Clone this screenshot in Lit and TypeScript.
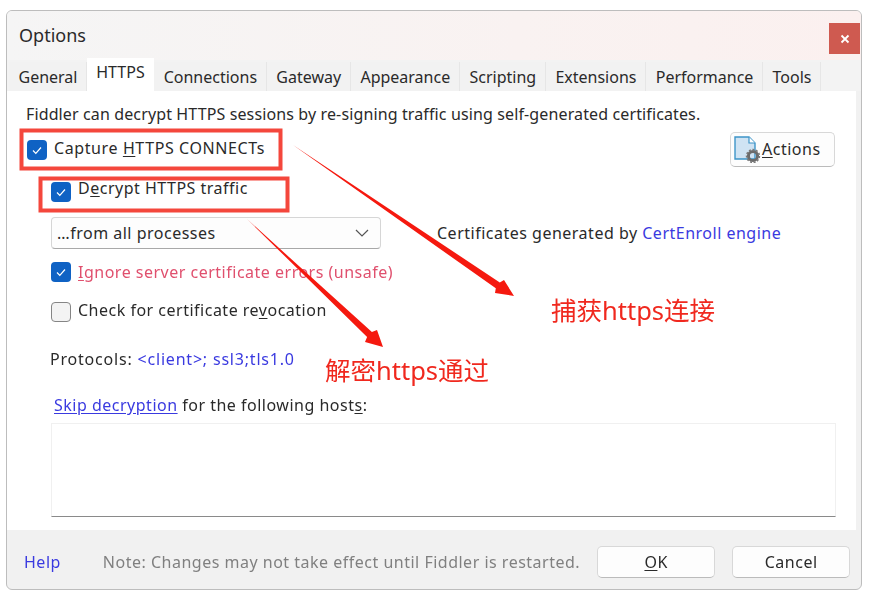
import { LitElement, html, css, svg } from "lit";
import { customElement } from "lit/decorators.js";

const TABS = ["General", "HTTPS", "Connections", "Gateway", "Appearance", "Scripting", "Extensions", "Performance", "Tools"];

@customElement("app-root")
export class AppRoot extends LitElement {
  static styles = css`
    :host { display: block; position: relative; width: 869px; height: 597px; background: #fff; overflow: hidden;
      font-family: "Noto Sans", "Noto Sans CJK SC", sans-serif; font-size: 16px; color: #2a2a2a; }
    .win { box-sizing: border-box; margin: 10px 0 0 6px; width: 856px; height: 580px; border: 1.5px solid #bdbdbd; border-radius: 6px;
      display: flex; flex-direction: column; overflow: hidden; background: #f1f1f1; filter: blur(0.3px); }
    .title { height: 49px; flex: none; display: flex; justify-content: space-between; padding: 12px 1px 0 12px; box-sizing: border-box;
      background: linear-gradient(90deg, #f5f5f5 0%, #f9f2f1 60%, #fbf0ef 100%); font-size: 18px; }
    .close { width: 31px; height: 31px; background: #cf5a50; color: #fff; display: flex; align-items: center; justify-content: center; }
    .tabs { display: flex; height: 31px; flex: none; padding-left: 2px; background: #f3f3f3; align-items: flex-end; }
    .tab { height: 29px; display: flex; align-items: center; padding: 0 8.75px 0 9.5px; background: #f2f2f2; border-right: 1px solid #e6e6e6; box-sizing: border-box; }
    .tab.on { background: #fff; height: 33px; padding: 0 9.5px 6px 9px; border: 0; }
    .body { flex: 1; background: #fff; margin-right: 5px; display: flex; flex-direction: column; padding: 12px 0 0 20px; box-sizing: border-box; letter-spacing: 0.5px; }
    .footer { flex: none; height: 59px; display: flex; align-items: center; padding: 5px 12px 0 17px; box-sizing: border-box; letter-spacing: 0.5px; }
    .row { display: flex; align-items: center; }
    .cb { width: 20px; height: 20px; box-sizing: border-box; border-radius: 4px; background: #0f62c4; flex: none; display: flex; align-items: center; justify-content: center; margin-right: 7px; }
    .cb.off { background: #f3f3f3; border: 1.5px solid #858585; margin-top: 3px; }
    .cb.low { margin-top: 8px; }
    .cb.mid { margin-top: 3px; }
    u { text-underline-offset: 2px; }
    .link { color: #3a3ae0; }
    .red { color: #e0506e; }
    .intro { height: 25px; margin-left: -1px; letter-spacing: 0.125px; }
    .capture { height: 40px; justify-content: space-between; padding-right: 21px; }
    .capture > .row { letter-spacing: 0.6px; }
    .actions { width: 105px; height: 35px; margin-top: 2px; box-sizing: border-box; border: 1px solid #d8d8d8; border-bottom-color: #bbb; border-radius: 5px; background: #fdfdfd;
      display: flex; align-items: center; padding-left: 3px; }
    .ind { padding-left: 24px; }
    .decrypt { height: 34px; margin-top: 3px; }
    .selrow { height: 36px; margin-top: 10px; }
    .select { width: 330px; height: 32px; box-sizing: border-box; border: 1px solid #d6d6d6; border-bottom-color: #a8a8a8; border-radius: 4px; background: #fdfdfd;
      display: flex; justify-content: space-between; align-items: center; padding: 0 10px 0 5px; margin-right: 56px; }
    .ign { height: 38px; margin-top: 2px; }
    .chk { height: 38px; }
    .proto { margin: 15px 0 0 23px; height: 30px; display: flex; align-items: center; letter-spacing: 0.8px; }
    .proto span { margin-right: 5px; }
    .skip { margin: 16px 0 0 27px; height: 30px; display: flex; align-items: center; }
    .hosts { margin: 3px 0 0 24px; width: 785px; height: 94px; box-sizing: border-box; border: 1px solid #f0f0f0; border-bottom: 1.5px solid #8a8a8a; background: #fff; }
    .note { color: #808080; margin-left: 42px; flex: 1; white-space: nowrap; }
    .btn { width: 118px; height: 32px; flex: none; box-sizing: border-box; border: 1px solid #d8d8d8; border-bottom-color: #bbb; border-radius: 5px; background: #fdfdfd;
      display: flex; align-items: center; justify-content: center; margin-left: 17px; }
    .over { position: absolute; inset: 0; pointer-events: none; }
    .cn { position: absolute; color: #f0281e; font-size: 25.5px; line-height: 32px; white-space: nowrap; }
  `;

  private check() {
    return html`<svg width="14" height="14" viewBox="0 0 14 14"><path d="M3 7.5l2.8 2.8L11 4.5" fill="none" stroke="#fff" stroke-width="1.2"/></svg>`;
  }

  render() {
    return html`
      <div class="win">
        <div class="title"><span>Options</span>
          <div class="close"><svg width="10" height="10" viewBox="0 0 10 10"><path d="M1.5 1.5l7 7M8.5 1.5l-7 7" stroke="#fff" stroke-width="1.8"/></svg></div>
        </div>
        <div class="tabs">${TABS.map((t) => html`<div class="tab ${t === "HTTPS" ? "on" : ""}">${t}</div>`)}</div>
        <div class="body">
          <div class="intro">Fiddler can decrypt HTTPS sessions by re-signing traffic using self-generated certificates.</div>
          <div class="row capture">
            <div class="row"><div class="cb mid">${this.check()}</div>Capture&nbsp;<u>H</u>TTPS CONNECTs</div>
            <div class="actions">
              <svg width="28" height="28" viewBox="0 0 28 28">
                <path d="M1 2h14l6 6v16H1z" fill="#cfe3f3" stroke="#3d94c8" stroke-width="1.4"/>
                <path d="M15 2v6h6" fill="#fff" stroke="#3d94c8" stroke-width="1.2"/>
                <circle cx="19" cy="21" r="4.6" fill="none" stroke="#6b6b6b" stroke-width="3"/>
                <circle cx="19" cy="21" r="6.4" fill="none" stroke="#7a7a7a" stroke-width="1.6" stroke-dasharray="2 1.6"/>
              </svg>
              <span><u>A</u>ctions</span>
            </div>
          </div>
          <div class="row ind decrypt"><div class="cb low">${this.check()}</div>D<u>e</u>crypt HTTPS traffic</div>
          <div class="row ind selrow">
            <div class="select"><span>…from all processes</span>
              <svg width="16" height="10" viewBox="0 0 16 10"><path d="M2 2l6 6 6-6" fill="none" stroke="#555" stroke-width="1.2"/></svg>
            </div>
            <span>Certificates generated by&nbsp;<span class="link">CertEnroll engine</span></span>
          </div>
          <div class="row ind ign red"><div class="cb">${this.check()}</div><span><u>I</u>gnore server certificate errors (unsafe)</span></div>
          <div class="row ind chk"><div class="cb off"></div><span>Check for certificate re<u>v</u>ocation</span></div>
          <div class="proto"><span>Protocols:</span><span class="link">&lt;client&gt;; ssl3;tls1.0</span></div>
          <div class="skip"><u class="link">Skip decryption</u>&nbsp;for the following host<u>s</u>:</div>
          <div class="hosts"></div>
        </div>
        <div class="footer">
          <span class="link">Help</span>
          <span class="note">Note: Changes may not take effect until Fiddler is restarted.</span>
          <div class="btn"><span><u>O</u>K</span></div>
          <div class="btn">Cancel</div>
        </div>
      </div>
      <div class="over">
        <svg width="869" height="597" viewBox="0 0 869 597" style="position:absolute;left:0;top:0">
          ${svg`
            <rect x="21.5" y="130.5" width="259" height="38" fill="none" stroke="#f4473c" stroke-width="4"/>
            <rect x="40.5" y="178.5" width="247" height="32" fill="none" stroke="#f4473c" stroke-width="4"/>
            <path d="M293 145L499.8 282.5L504 280L514 296L495 293L495.8 288.3Z" fill="#f5190f"/>
            <path d="M247 219L371.9 332.1L377 330L383 347L365 342L367.1 337.1Z" fill="#f5190f"/>
          `}
        </svg>
        <div class="cn" style="left:551px;top:294px">捕获https连接</div>
        <div class="cn" style="left:325px;top:354px">解密https通过</div>
      </div>
    `;
  }
}
